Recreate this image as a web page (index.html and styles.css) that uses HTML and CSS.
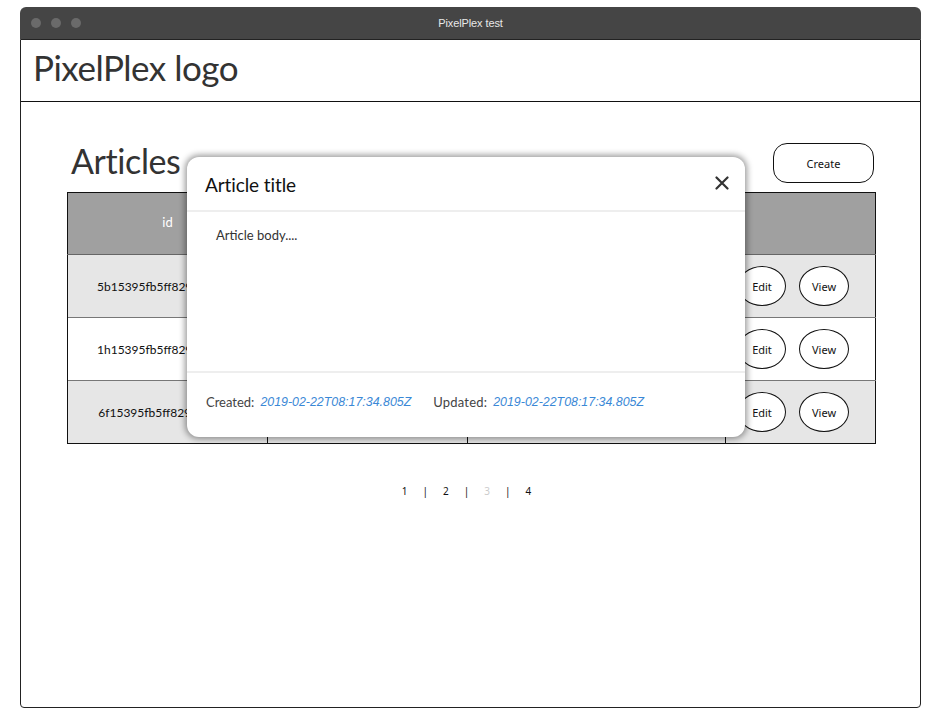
FILE: index.html
```html
<!DOCTYPE html>
<html lang="en">
<head>
    <meta charset="UTF-8">
    <meta name="viewport" content="width=device-width, initial-scale=1.0">
    <title>PixelPlex test</title>
    <link rel="stylesheet" href="styles.css">
</head>
<body>
    <div class="window">
        <div class="titlebar">
            <div class="dots">
                <span></span>
                <span></span>
                <span></span>
            </div>
            <div class="window-title">PixelPlex test</div>
        </div>

        <div class="frame">
            <header class="header">
                <div class="logo">PixelPlex logo</div>
            </header>

            <main class="content">
                <div class="toolbar">
                    <h1>Articles</h1>
                    <button class="btn-create">Create</button>
                </div>

                <table class="articles">
                    <thead>
                        <tr>
                            <th>id</th>
                            <th>title</th>
                            <th>updated</th>
                            <th></th>
                        </tr>
                    </thead>
                    <tbody>
                        <tr>
                            <td>5b15395fb5ff829e1a4c2d</td>
                            <td>Article title</td>
                            <td>2019-02-22T08:17:34.805Z</td>
                            <td class="actions"><button class="pill">Edit</button><button class="pill view">View</button></td>
                        </tr>
                        <tr>
                            <td>1h15395fb5ff829e1a4c2d</td>
                            <td>Article title</td>
                            <td>2019-02-22T08:17:34.805Z</td>
                            <td class="actions"><button class="pill">Edit</button><button class="pill view">View</button></td>
                        </tr>
                        <tr>
                            <td>6f15395fb5ff829e1a4c2d</td>
                            <td>Article title</td>
                            <td>2019-02-22T08:17:34.805Z</td>
                            <td class="actions"><button class="pill">Edit</button><button class="pill view">View</button></td>
                        </tr>
                    </tbody>
                </table>

                <div class="pager">
                    <span>1</span><span>|</span><span>2</span><span>|</span><span class="current">3</span><span>|</span><span>4</span>
                </div>
            </main>

            <!-- modal sits over the list -->
            <div class="modal">
                <div class="modal-head">
                    <span class="modal-title">Article title</span>
                    <svg class="close" width="14" height="14" viewBox="0 0 14 14">
                        <path d="M1.5 1.5 L12.5 12.5 M12.5 1.5 L1.5 12.5" stroke="#333" stroke-width="2.2" stroke-linecap="round"/>
                    </svg>
                </div>
                <div class="modal-body">Article body....</div>
                <div class="modal-foot">
                    <span class="label">Created:</span>
                    <span class="date">2019-02-22T08:17:34.805Z</span>
                    <span class="label updated">Updated:</span>
                    <span class="date">2019-02-22T08:17:34.805Z</span>
                </div>
            </div>
        </div>
    </div>
</body>
</html>
```

FILE: styles.css
```css
body {
    margin: 0;
    background-color: #fff;
    font-family: 'Lato', sans-serif;
    color: #333;
}

.window {
    width: 901px;
    margin: 7px 0 0 20px;
}

/* Title bar */
.titlebar {
    position: relative;
    height: 32px;
    background-color: #454545;
    border-radius: 6px 6px 0 0;
    display: flex;
    align-items: center;
    justify-content: center;
}

.dots {
    position: absolute;
    left: 11px;
    top: 11px;
    display: flex;
    gap: 10px;
}

.dots span {
    width: 10px;
    height: 10px;
    border-radius: 50%;
    background-color: #6a6a6a;
}

.window-title {
    font-family: 'Liberation Sans', sans-serif;
    font-size: 11px;
    color: #e8e8e8;
    letter-spacing: -0.1px;
}

.frame {
    position: relative;
    height: 667px;
    border: 1px solid #222;
    border-radius: 0 0 4px 4px;
}

.header {
    height: 61px;
    border-bottom: 1px solid #111;
    display: flex;
    align-items: center;
    padding-left: 12px;
}

.logo {
    font-size: 35px;
    color: #333;
    letter-spacing: -0.5px;
    margin-top: -8px;
}

/* Content */
.content {
    padding: 41px 44px 0 46px;
}

.toolbar {
    display: flex;
    justify-content: space-between;
    align-items: center;
    height: 40px;
    margin-bottom: 9px;
}

.toolbar h1 {
    margin: -6px 0 0 4px;
    font-size: 34px;
    font-weight: 400;
    color: #333;
    letter-spacing: -0.4px;
}

.btn-create {
    width: 101px;
    height: 40px;
    margin-right: 2px;
    border: 1px solid #111;
    border-radius: 14px;
    background-color: #fff;
    font-family: 'Noto Sans', sans-serif;
    font-size: 11px;
    color: #111;
}

.articles {
    width: 809px;
    border-collapse: collapse;
    border: 1px solid #111;
    font-size: 12px;
    color: #111;
}

.articles th,
.articles td {
    height: 62px;
    padding: 0;
    text-align: center;
    border-left: 1px solid #111;
}

.articles th {
    height: 58px;
    padding-bottom: 3px;
    background-color: #a0a0a0;
    color: #fff;
    font-weight: 400;
    font-size: 13px;
    border-bottom: 1px solid #666;
}

.articles th:nth-child(1) { width: 199px; }
.articles th:nth-child(2) { width: 199px; }
.articles th:nth-child(3) { width: 257px; }

.articles tbody tr:nth-child(odd) td {
    background-color: #e6e6e6;
}

.articles tbody tr + tr td {
    border-top: 1px solid #777;
}

.articles td.actions {
    white-space: nowrap;
    text-align: left;
    padding-left: 12px;
}

.pill {
    width: 48px;
    height: 40px;
    border: 1px solid #111;
    border-radius: 50%;
    background-color: #fff;
    font-family: 'Noto Sans', sans-serif;
    font-size: 11px;
    color: #111;
    padding: 0;
}

.pill.view {
    width: 50px;
    margin-left: 13px;
}

.pager {
    margin-top: 40px;
    padding-right: 10px;
    display: flex;
    justify-content: center;
    gap: 15px;
    font-family: 'Noto Sans', sans-serif;
    font-size: 10px;
    color: #111;
}

.pager .current {
    color: #ccc;
}

/* Modal */
.modal {
    position: absolute;
    left: 166px;
    top: 117px;
    width: 558px;
    height: 280px;
    background-color: #fff;
    border-radius: 12px;
    box-shadow: 0 0 6px 2px rgba(0, 0, 0, 0.4);
    display: flex;
    flex-direction: column;
}

.modal-head {
    height: 53px;
    border-bottom: 2px solid #eee;
    display: flex;
    align-items: center;
    justify-content: space-between;
    padding: 0 16px 0 18px;
}

.modal-title {
    font-size: 19px;
    color: #111;
    letter-spacing: -0.1px;
    margin-top: 1px;
}

.close {
    margin-top: -2px;
}

.modal-body {
    height: 144px;
    padding: 15px 29px 0;
    font-size: 13px;
    color: #333;
    border-bottom: 2px solid #eee;
}

.modal-foot {
    flex: 1;
    display: flex;
    align-items: center;
    padding: 0 19px 6px;
    font-size: 13px;
    color: #444;
}

.modal-foot .date {
    font-family: 'Liberation Sans', sans-serif;
    font-style: italic;
    font-size: 12.4px;
    color: #3a88d6;
    margin-left: 6px;
}

.modal-foot .updated {
    margin-left: 22px;
    letter-spacing: 0.2px;
}
```
